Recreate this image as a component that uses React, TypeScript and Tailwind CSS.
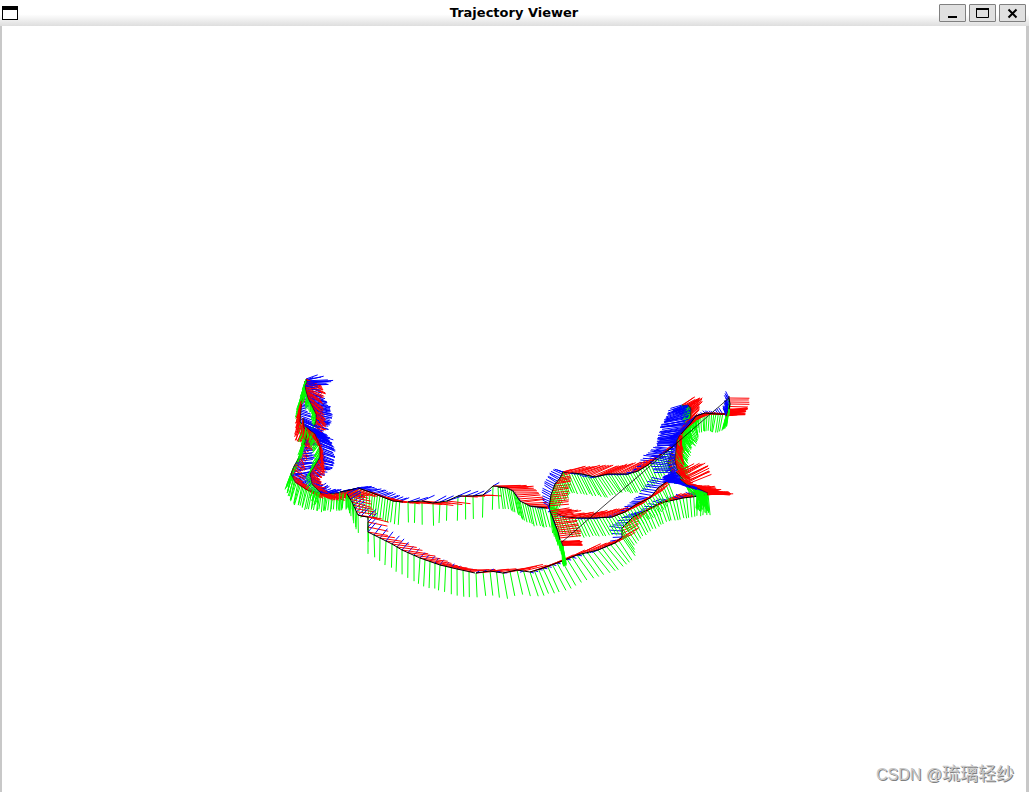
import type { ReactNode } from 'react';

// x, y, then the screen-space tips of the red, green and blue axes
type Keyframe = [number, number, number, number, number, number, number, number];

interface Track {
  spacing: number;
  frames: Keyframe[];
}

const tracks: Track[] = [
  // left tower
  {
    spacing: 1.6,
    frames: [
      [305, 381, -2, 20, -4, 20, 8, -5],
      [303, 394, -5, 20, -7, 20, 10, 3],
      [301, 408, -5, 16, -3, 12, 5, 1],
      [300, 422, -4, 16, 0, 10, 22, 10],
      [306, 428, -8, 14, -4, 18, 22, 9],
      [304, 442, 5, 8, -6, 17, 7, 1],
      [300, 456, 5, 8, -6, 18, 14, -1],
      [294, 466, 10, 7, -6, 18, 20, -3],
      [291, 474, 13, 8, -5, 17, 20, -3],
      [295, 482, 15, 8, -5, 18, 17, -7],
      [307, 490, 18, 8, -4, 19, 10, -10],
      [323, 494, 18, 6, -2, 17, 13, -3],
      [338, 493, 16, 5, -1, 17, 12, -2],
      [350, 490, 18, 5, 0, 17, 12, -3],
    ],
  },
  {
    spacing: 0.6,
    frames: [
      [306, 379, 14, 6, -4, 10, 12, -5],
      [307, 382, 16, 9, -3, 8, 25, 0],
      [305, 386, 20, 9, -4, 12, 20, -2],
    ],
  },
  {
    spacing: 1,
    frames: [
      [305, 386, 19, 8, -4, 14, 12, -3],
      [306, 391, 17, 10, -4, 12, 16, 4],
      [308, 398, 15, 13, -2, 10, 18, 4],
      [312, 406, 12, 12, 2, 8, 19, 4],
      [316, 414, 9, 11, -4, 8, 15, 3],
      [316, 421, 9, 9, -3, 5, 14, 3],
      [314, 427, 6, 6, -2, 4, 14, 4],
    ],
  },
  {
    spacing: 1.4,
    frames: [
      [303, 418, -2, 16, 0, 8, 10, 4],
      [304, 428, 5, 14, -4, 14, 22, 8],
      [308, 432, 6, 12, -6, 15, 24, 8],
      [304, 445, 7, 6, -5, 17, 8, 2],
    ],
  },
  {
    spacing: 1.2,
    frames: [
      [306, 427, 6, 11, 0, 8, 17, 8],
      [315, 434, 6, 14, -5, 10, 17, 9],
      [320, 447, 4, 14, -6, 9, 14, 5],
      [320, 457, 4, 13, -7, 8, 14, 5],
      [314, 467, 9, 8, -4, 3, 17, 2],
      [310, 474, 10, 6, -4, 4, 11, 3],
      [312, 484, 10, 4, -4, 8, 8, 3],
      [321, 493, 14, 4, -4, 14, 10, 0],
    ],
  },
  // upper corridor
  {
    spacing: 3,
    frames: [
      [340, 492, 22, 6, -1, 18, 16, -3],
      [350, 490, 22, 6, -1, 20, 16, -3],
      [358, 488, 22, 8, -2, 22, 14, -1],
      [370, 492, 22, 7, -2, 23, 12, -3],
      [380, 496, 20, 5, -3, 23, 10, -4],
      [393, 501, 20, 2, -3, 22, 10, -4],
      [403, 502, 28, 2, -1, 23, 10, -4],
    ],
  },
  {
    spacing: 9,
    frames: [
      [408, 502, 34, 2, 0, 20, 12, -4],
      [422, 501, 28, 3, 0, 24, 12, -5],
      [433, 503, 20, 2, 0, 22, 14, -7],
      [447, 501, 24, 2, -1, 20, 14, -5],
      [458, 496, 20, 1, 0, 24, 12, -5],
      [473, 496, 20, 0, 0, 23, 12, -5],
      [483, 495, 18, 1, 0, 22, 8, -5],
      [493, 486, 28, -1, 0, 23, 7, -4],
      [505, 487, 22, -1, 2, 22, 5, -3],
    ],
  },
  {
    spacing: 2.5,
    frames: [
      [498, 487, 28, -1, 2, 22, 1, 0],
      [507, 488, 26, -1, 4, 22, 1, 0],
      [513, 491, 24, 0, 5, 22, 1, 0],
      [520, 501, 24, -3, 5, 20, 1, 0],
      [530, 506, 20, 0, 5, 20, -1, 0],
      [547, 508, 12, 2, 5, 20, -4, 1],
    ],
  },
  // lower corridor
  {
    spacing: 3.4,
    frames: [
      [347, 494, 22, 5, 2, 16, 12, -6],
      [352, 502, 20, 5, 1, 18, 10, -7],
      [358, 515, 20, 3, 0, 18, 8, -8],
      [361, 516, 20, 3, 0, 18, 8, -8],
    ],
  },
  {
    spacing: 5,
    frames: [
      [361, 516, 20, 3, 0, 2, 8, -8],
      [368, 517, 20, 5, 0, 3, 8, -8],
      [368, 532, 20, 3, 0, 20, 8, -10],
    ],
  },
  {
    spacing: 5.8,
    frames: [
      [368, 532, 20, 3, 0, 22, 8, -10],
      [380, 538, 22, 3, 0, 23, 8, -9],
      [392, 544, 24, 4, -1, 24, 7, -8],
      [402, 550, 27, 4, 0, 25, 6, -7],
      [420, 558, 27, 4, -1, 26, 5, -6],
      [440, 565, 27, 3, -1, 26, 4, -5],
      [457, 569, 26, 1, 0, 26, 3, -3],
      [475, 573, 26, -3, 1, 25, 3, -2],
    ],
  },
  {
    spacing: 8,
    frames: [
      [476, 573, 26, -3, 1, 24, 3, -2],
      [490, 571, 26, -3, 3, 25, 4, -2],
      [503, 573, 28, -5, 4, 25, 4, 0],
      [517, 570, 26, -5, 6, 25, -3, 1],
      [530, 572, 22, -7, 8, 24, -4, 1],
    ],
  },
  {
    spacing: 4.8,
    frames: [
      [530, 572, 20, -6, 8, 24, 4, 1],
      [543, 568, 22, -8, 11, 25, 4, 1],
      [557, 563, 22, -10, 14, 25, 4, 1],
      [577, 555, 24, -11, 16, 23, 5, 1],
      [598, 550, 22, -11, 17, 21, -6, 2],
      [615, 543, 20, -11, 15, 20, -7, 1],
      [622, 537, 17, -10, 13, 19, -10, 1],
    ],
  },
  {
    spacing: 3.6,
    frames: [
      [622, 537, 17, -9, 13, 19, -10, 1],
      [622, 528, 17, -8, 12, 18, -13, -1],
      [633, 517, 18, -9, 10, 19, -12, 1],
      [648, 510, 20, -10, 8, 18, -10, 1],
      [660, 503, 22, -9, 6, 19, -8, -2],
      [683, 498, 24, -8, 3, 20, -7, -3],
      [708, 495, 20, -2, -2, 20, -9, -5],
    ],
  },
  // middle room
  {
    spacing: 2.8,
    frames: [
      [563, 472, 20, -5, 9, 21, -7, -2],
      [582, 474, 24, -9, 11, 21, -5, 1],
      [595, 477, 24, -11, 13, 20, -5, 1],
      [608, 474, 22, -10, 12, 18, -5, 1],
      [628, 474, 22, -14, 10, 19, -6, 1],
      [638, 471, 20, -15, 10, 18, -6, 1],
      [648, 465, 18, -14, 9, 18, -10, 0],
      [657, 457, 16, -12, 7, 18, -13, -1],
      [673, 447, 10, -10, 5, 18, -16, -2],
    ],
  },
  {
    spacing: 3,
    frames: [
      [551, 511, 20, -2, 5, 20, -3, 1],
      [565, 517, 22, -4, 8, 20, -2, 1],
      [578, 518, 24, -6, 9, 19, -3, 1],
      [593, 518, 24, -9, 10, 18, -4, 1],
      [612, 517, 22, -10, 11, 18, -5, 0],
      [625, 512, 20, -10, 11, 17, -6, 0],
      [635, 505, 18, -10, 11, 16, -8, 0],
      [650, 498, 16, -10, 10, 17, -12, -2],
      [658, 488, 14, -8, 9, 18, -14, -2],
      [670, 479, 10, -5, 6, 16, -16, -3],
    ],
  },
  {
    spacing: 2.2,
    frames: [
      [563, 472, 9, -2, 8, 20, -9, -3],
      [560, 478, 10, -2, 8, 20, -10, -5],
      [555, 484, 16, -2, 6, 21, -9, -5],
      [551, 495, 17, -2, 5, 22, -9, -5],
      [549, 508, 20, -1, 4, 22, -5, -3],
    ],
  },
  {
    spacing: 2,
    frames: [
      [550, 511, 20, -3, 3, 22, -2, -5],
      [554, 521, 22, -3, 4, 22, -2, -4],
      [558, 532, 22, -2, 4, 22, 0, 0],
      [560, 540, 21, -2, 4, 22, 0, 0],
    ],
  },
  {
    spacing: 0.4,
    frames: [
      [561, 541, 20, -1, 3, 24, 0, 0],
      [563, 546, 18, -1, 2, 20, 0, 0],
    ],
  },
  // right tower
  {
    spacing: 1,
    frames: [
      [682, 405, 12, -7, 3, 8, -10, 5],
      [691, 407, 11, -8, 0, 10, -16, 6],
      [693, 412, 9, -9, -4, 8, -10, 4],
    ],
  },
  {
    spacing: 1,
    frames: [
      [688, 405, 8, -6, -6, 12, -20, 7],
      [691, 409, 8, -7, -6, 12, -25, 8],
      [690, 419, 8, -8, -6, 10, -27, 5],
      [685, 428, 10, -8, 1, 15, -25, 3],
      [680, 436, 9, -7, 4, 17, -21, 3],
      [675, 447, 8, -6, 6, 17, -18, -1],
    ],
  },
  {
    spacing: 1.7,
    frames: [
      [672, 452, 5, 10, 3, 16, -17, -2],
      [668, 462, 6, 9, 4, 14, -18, -3],
      [672, 474, 6, 7, 3, 10, -16, 2],
    ],
  },
  {
    spacing: 1.1,
    frames: [
      [700, 414, -12, 8, -3, 14, -3, 3],
      [692, 419, -12, 12, -3, 14, -7, 6],
      [684, 428, -5, 14, 8, 16, -5, 8],
      [677, 440, 6, 15, 12, 16, -8, -2],
      [676, 450, 7, 14, 11, 15, -6, -1],
      [675, 460, 9, 13, 12, 10, -6, -2],
      [677, 469, 11, 9, 12, 4, -10, 6],
      [681, 476, 10, 3, 8, 9, -18, 4],
    ],
  },
  {
    spacing: 1.2,
    frames: [
      [676, 472, 14, -7, 8, 11, -12, 5],
      [681, 477, 25, -13, 8, 11, -18, 0],
      [688, 485, 24, -10, 7, 14, -22, -4],
    ],
  },
  {
    spacing: 1,
    frames: [
      [680, 479, 8, 3, 12, 8, -17, 1],
      [686, 484, 13, 3, 14, 9, -16, -2],
      [692, 488, 18, -2, 10, 14, -10, -4],
      [700, 490, 25, 2, 6, 18, -8, -5],
      [708, 494, 24, 0, 1, 20, -7, -3],
      [703, 495, 29, -1, -3, 18, -5, -3],
    ],
  },
  {
    spacing: 0.8,
    frames: [
      [697, 488, 18, 2, 0, 20, -7, -2],
      [708, 493, 20, 1, -6, 18, -4, -3],
    ],
  },
  {
    spacing: 2.2,
    frames: [
      [681, 434, 12, -12, 14, 12, -12, 4],
      [690, 424, 14, -9, 8, 16, -8, 4],
      [696, 416, 16, -3, 1, 17, -3, 2],
      [705, 413, 16, 1, 0, 18, -2, -2],
      [716, 414, 14, 1, -3, 18, -3, -3],
      [725, 414, 20, -1, -3, 18, -4, -8],
    ],
  },
  {
    spacing: 0.4,
    frames: [
      [726, 416, 18, -1, -3, 14, -2, -8],
      [729, 409, 18, -1, -1, 14, -3, -9],
    ],
  },
  {
    spacing: 2.2,
    frames: [
      [729, 409, 18, 0, -2, 10, -4, -9],
      [730, 404, 20, 1, -1, 12, -5, -8],
      [729, 398, 20, 0, 0, 12, -3, -6],
      [729, 396, 20, 0, 0, 12, -3, -4],
    ],
  },
];

const noise = (n: number) => {
  const s = Math.sin(n * 91.7) * 4375.5;
  return (s - Math.floor(s)) * 2 - 1;
};

function samplePoses({ spacing, frames }: Track): number[][] {
  const poses: number[][] = [];
  for (let i = 0; i < frames.length - 1; i++) {
    const a = frames[i];
    const b = frames[i + 1];
    const count = Math.max(1, Math.round(Math.hypot(b[0] - a[0], b[1] - a[1]) / spacing));
    for (let k = 0; k < count; k++) {
      poses.push(a.map((v, j) => v + ((b[j] - v) * k) / count));
    }
  }
  return poses;
}

// higher layer values are drawn later
const axes = [
  { color: '#00ff00', at: 4, layer: 0 },
  { color: '#0000ff', at: 6, layer: 0.5 },
  { color: '#ff0000', at: 2, layer: 1 },
];

const points = (track: Track) => track.frames.map((f) => `${f[0]},${f[1]}`).join(' ');

function AxisLines({ track, seed }: { track: Track; seed: number }) {
  const wobble = track.spacing < 2 ? 1.6 : 0.8;
  const lines = samplePoses(track).flatMap((p, i) =>
    axes.map(({ color, at, layer }) => {
      const n = seed * 53 + i * 3 + at;
      const jitter = Math.hypot(p[at], p[at + 1]) > 6 ? wobble : 0.4;
      return {
        key: `${i}-${at}`,
        color,
        depth: layer + noise(n + 3.3),
        x1: p[0],
        y1: p[1],
        x2: p[0] + p[at] + noise(n) * jitter,
        y2: p[1] + p[at + 1] + noise(n + 0.5) * jitter,
      };
    }),
  );
  lines.sort((a, b) => a.depth - b.depth);

  return (
    <g>
      {lines.map(({ key, color, x1, y1, x2, y2 }) => (
        <line key={key} x1={x1} y1={y1} x2={x2} y2={y2} stroke={color} />
      ))}
    </g>
  );
}

function TrajectoryCanvas() {
  return (
    <svg viewBox="2 26 1024 766" className="block w-full" role="img" aria-label="Camera trajectory">
      {tracks.map((track, i) => (
        <g key={i}>
          <AxisLines track={track} seed={i + 1} />
          <polyline
            points={points(track)}
            fill="none"
            stroke="#000"
            strokeOpacity={track.spacing < 2 ? 0.5 : 1}
          />
        </g>
      ))}
      <path d="M562 542L729 398" stroke="#000" strokeOpacity="0.75" fill="none" />
    </svg>
  );
}

function WindowButton({ label, children }: { label: string; children: ReactNode }) {
  return (
    <button
      type="button"
      aria-label={label}
      className="flex h-[18px] w-[27px] items-center justify-center rounded-[1px] border border-[#808080] bg-[#e0e0e0]"
    >
      <svg width="13" height="12" viewBox="0 0 13 12" fill="none" stroke="#000">
        {children}
      </svg>
    </button>
  );
}

export default function App() {
  return (
    <div className="relative flex min-h-screen flex-col bg-white">
      <header className="grid h-[26px] grid-cols-[1fr_auto_1fr] items-center bg-linear-to-b from-white from-55% to-[#dedede] pr-[3px] pl-[2px]">
        <svg width="16" height="14" viewBox="0 0 16 14" shapeRendering="crispEdges" aria-hidden="true">
          <path d="M0 0H16V14H0Z" fill="#000" />
          <path d="M1 4H15V13H1Z" fill="#fff" />
        </svg>
        <h1 className="font-['DejaVu_Sans',sans-serif] text-[13px] leading-6 font-bold text-black">
          Trajectory Viewer
        </h1>
        <div className="flex justify-end gap-[3px]">
          <WindowButton label="Minimize">
            <path d="M2 10H11" strokeWidth="2" />
          </WindowButton>
          <WindowButton label="Maximize">
            <path d="M0 2H13" strokeWidth="2" />
            <path d="M0.5 1V10.5H12.5V1" />
          </WindowButton>
          <WindowButton label="Close">
            <path d="M2.5 2.5L10.5 10.5M10.5 2.5L2.5 10.5" strokeWidth="2" />
          </WindowButton>
        </div>
      </header>

      <main className="flex-1 border-r-[3px] border-l-2 border-[#c8c8c8]">
        <TrajectoryCanvas />
      </main>

      <p className="absolute right-[15px] bottom-1 font-['Liberation_Sans','Noto_Sans_CJK_SC',sans-serif] text-[18px] leading-7 text-[#c8c8c8] [text-shadow:1px_1px_0_#808080]">
        <span className="text-base">CSDN @</span>琉璃轻纱
      </p>
    </div>
  );
}
